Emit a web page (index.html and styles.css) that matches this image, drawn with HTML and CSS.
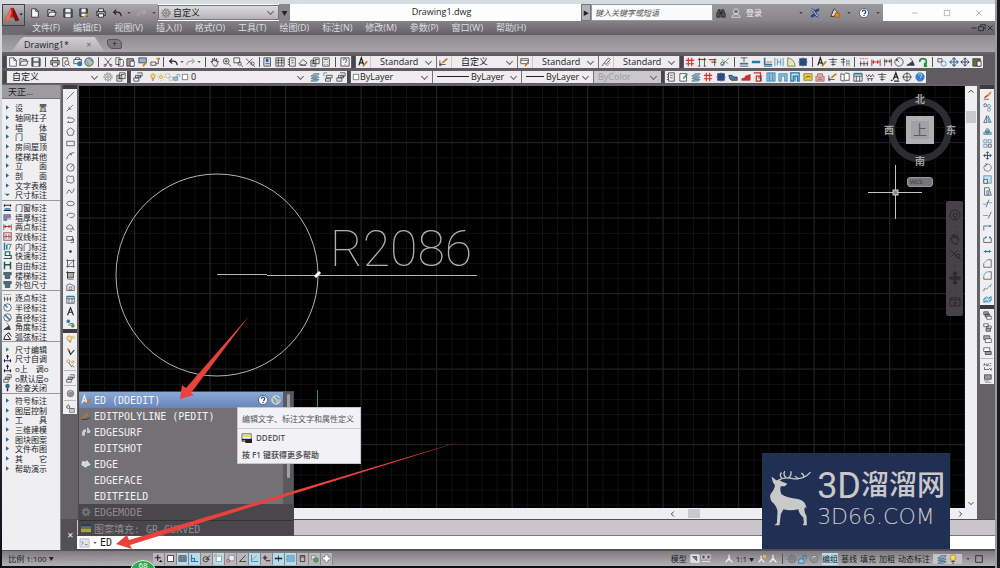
FILE: index.html
```html
<!DOCTYPE html>
<html lang="zh-CN">
<head>
    <meta charset="UTF-8">
    <meta name="viewport" content="width=device-width, initial-scale=1.0">
    <title>Drawing1.dwg</title>
    <link rel="stylesheet" href="styles.css">
</head>
<body>
    <div class="window">
        <header class="header">
            <button class="app-button" aria-label="应用程序">
                <svg viewBox="0 0 22 22"><path fill="#b3241a" d="M2 16L8 3h3l6 13-4 1-2-4H7l-1 4z"/><path fill="#ef6a55" d="M2 16L8 3l1 5-3 9z"/><path fill="#7d120c" d="M11 3l6 13-4 1-3-8z"/><path fill="#222" d="M17 9h4l-2 2z"/></svg>
            </button>
            <div class="header-rows">
                <div class="titlebar">
                    <div class="quick tools" data-icons="new open save saveas print undo dot redo dot"></div>
                    <label class="combo workspace"><span class="icons" data-draw="gear"></span>
                        <select aria-label="工作空间"><option>自定义</option></select>
                    </label>
                    <button class="more" aria-label="更多">▼</button>
                    <h1 class="title">Drawing1.dwg</h1>
                    <button class="search-arrow" aria-label="展开">▶</button>
                    <input class="search" type="text" aria-label="搜索" placeholder="键入关键字或短语">
                    <div class="account">
                        <button class="tool" data-draw="find" aria-label="查找"></button>
                        <button class="login"><span class="icons" data-draw="user"></span>登录</button>
                        <span class="tools" data-icons="dot exchange apps dot help dot"></span>
                    </div>
                    <div class="controls">
                        <button data-draw="min" aria-label="最小化"></button>
                        <button data-draw="max" aria-label="最大化"></button>
                        <button data-draw="close" aria-label="关闭"></button>
                    </div>
                </div>
                <nav class="menu">
                    <a href="#">文件(F)</a>
                    <a href="#">编辑(E)</a>
                    <a href="#">视图(V)</a>
                    <a href="#">插入(I)</a>
                    <a href="#">格式(O)</a>
                    <a href="#">工具(T)</a>
                    <a href="#">绘图(D)</a>
                    <a href="#">标注(N)</a>
                    <a href="#">修改(M)</a>
                    <a href="#">参数(P)</a>
                    <a href="#">窗口(W)</a>
                    <a href="#">帮助(H)</a>
                    <span class="doc-controls" data-icons="min restore close"></span>
                </nav>
            </div>
        </header>

        <div class="tabs">
            <button class="tab">Drawing1* <span class="tab-close">✕</span></button>
            <button class="tab-new" aria-label="新建">+</button>
        </div>

        <div class="toolbar-row">
            <i class="handle"></i>
            <div class="tools standard" data-icons="new open save | print preview publish globe | cut copy paste match block | undo dot redo dot | pan zoom zoomwin zoomprev | props center sheet markup sets calc | helpbox"></div>
            <i class="handle"></i>
            <button class="tool" data-draw="textstyle" aria-label="文字样式"></button>
            <label class="combo style"><select aria-label="文字样式"><option>Standard</option></select></label>
            <button class="tool" data-draw="dimstyle" aria-label="标注样式"></button>
            <label class="combo style"><select aria-label="标注样式"><option>自定义</option></select></label>
            <button class="tool" data-draw="tablestyle" aria-label="表格样式"></button>
            <label class="combo style"><select aria-label="表格样式"><option>Standard</option></select></label>
            <button class="tool" data-draw="leader" aria-label="引线样式"></button>
            <label class="combo style"><select aria-label="引线样式"><option>Standard</option></select></label>
            <i class="handle"></i>
            <div class="tools arch" data-icons="axis axis2 axis3 dimcut | beam bar stair mirrorv angle column | textstyle axisn axism | dims dimred dimblk dial level rotateg | link movered move clip"></div>
        </div>
        <div class="toolbar-row">
            <i class="handle"></i>
            <label class="combo space"><select aria-label="工作空间"><option>自定义</option></select></label>
            <div class="tools pair" data-icons="gear sets"></div>
            <i class="handle"></i>
            <button class="tool" data-draw="layers" aria-label="图层"></button>
            <label class="combo layer"><span class="icons" data-draw="bulb sun viewport lock square"></span>
                <select aria-label="图层"><option>0</option></select>
            </label>
            <div class="tools trio" data-icons="stack layback layers"></div>
            <i class="handle"></i>
            <label class="combo color"><span class="icons" data-draw="square"></span>
                <select aria-label="颜色"><option>ByLayer</option></select>
            </label>
            <label class="combo linetype"><i class="line"></i>
                <select aria-label="线型"><option>ByLayer</option></select>
            </label>
            <label class="combo weight"><i class="line"></i>
                <select aria-label="线宽"><option>ByLayer</option></select>
            </label>
            <label class="combo plot"><select aria-label="打印样式" disabled><option>ByColor</option></select></label>
            <i class="handle"></i>
            <div class="tools arch2" data-icons="sheet edit stack axis column roof stairs door wall pipe wall2 yellow house dimstyle book table dims2 axisn leveltext target helpblue"></div>
        </div>

        <main class="main">
            <aside class="palette">
                <h2>天正...</h2>
                <div class="palette-list" id="palette"></div>
            </aside>
            <div class="work">
                <div class="work-top">
                    <div class="side-tools">
                        <i class="grip"></i>
                        <div class="column" data-icons="line xline pline polygon rect arc circle cloud spline ellipse earc insert makeblock point hatch gradient region table text addsel"></div>
                        <i class="grip"></i>
                        <div class="column" data-icons="bulbset pen penset - layers - sphere - sunbox"></div>
                    </div>
                    <div class="viewport">
                        <div class="canvas">
                            <svg class="drawing" aria-label="图形">
                                <defs>
                                    <pattern id="minor" x="10" y="11" width="15.1" height="15.1" patternUnits="userSpaceOnUse"><path d="M.5 0V15.1M0 .5H15.1" stroke="#111115"/></pattern>
                                    <pattern id="major" x="55" y="56" width="75.5" height="75.5" patternUnits="userSpaceOnUse"><path d="M.5 0V75.5M0 .5H75.5" stroke="#202027"/></pattern>
                                </defs>
                                <rect width="100%" height="100%" fill="url(#minor)"/>
                                <rect width="100%" height="100%" fill="url(#major)"/>
                                <circle cx="138" cy="189" r="101" fill="none" stroke="#b4b4b4"/>
                                <path d="M138 188.500h50M188 189.500h210" stroke="#b4b4b4" fill="none"/>
                                <path d="M236 191l5-5" stroke="#fff" stroke-width="3"/>
                                <path d="M238.500 304v21" stroke="#2f9a35"/>
                                <text class="radius-text" x="251" y="180">R2086</text>
                            </svg>
                            <svg class="crosshair" viewBox="0 0 54 54" aria-hidden="true"><path d="M0 27.500h54M27.500 0v54" stroke="#c4c4bf"/><rect x="25" y="25" width="5" height="5" fill="#888" stroke="#ccc"/></svg>
                            <div class="compass">
                                <span class="north">北</span>
                                <span class="west">西</span>
                                <button class="cube">上</button>
                                <span class="east">东</span>
                                <span class="south">南</span>
                            </div>
                            <button class="wcs">WCS</button>
                            <div class="navbar" data-icons="wheel dot pan zoomprev dot orbit dot show"></div>
                        </div>
                        <div class="vscroll"><span data-draw="up"></span><i></i><span class="down" data-draw="down"></span></div>
                        <div class="hscroll"><span data-draw="left"></span><i></i><span class="right" data-draw="right"></span></div>
                    </div>
                    <div class="side-tools modify">
                        <i class="grip"></i>
                        <div class="column" data-icons="erase copyobj mirror offset array move rotate scale stretch trim extend breakat break join chamfer fillet blend explode"></div>
                        <i class="grip"></i>
                        <div class="column" data-icons="front back above under - abc hatchback"></div>
                    </div>
                </div>
                <div class="command">
                    <button class="command-close" aria-label="关闭命令行">✕</button>
                    <div class="command-body">
                        <label class="prompt"><span data-draw="prompt"></span><span data-draw="dot"></span>
                            <input type="text" value="ED" aria-label="命令">
                        </label>
                        <div class="suggest">
                            <ul class="matches">
                                <li class="selected"><span data-draw="textstyle"></span>ED (DDEDIT)<b data-draw="help globe"></b></li>
                                <li><span data-draw="pedit"></span>EDITPOLYLINE (PEDIT)</li>
                                <li><span data-draw="surf"></span>EDGESURF</li>
                                <li><span></span>EDITSHOT</li>
                                <li><span data-draw="edge"></span>EDGE</li>
                                <li><span></span>EDGEFACE</li>
                                <li><span></span>EDITFIELD</li>
                            </ul>
                            <ul class="extra">
                                <li><span data-draw="cog"></span>EDGEMODE</li>
                                <li><span data-draw="fill"></span>图案填充: GR_CURVED</li>
                            </ul>
                        </div>
                        <div class="tip">
                            <p>编辑文字、标注文字和属性定义</p>
                            <h3><span data-draw="ddedit"></span>DDEDIT</h3>
                            <h4>按 F1 键获得更多帮助</h4>
                        </div>
                    </div>
                </div>
            </div>
        </main>

        <footer class="status">
            <button class="ratio">比例 1:100 <small>▼</small></button>
            <span class="coords">-1959826, 3205471, 0</span>
            <div class="toggles" id="toggles" data-icons="snap square grid ortho polar osnap osnap3 otrack ducs dyn lwt tpy qp sc plus"></div>
            <div class="status-right">
                <button>模型</button>
                <span class="tools" data-icons="layout layout2"></span>
                <button class="scale"><span data-draw="person"></span>1:1 <small>▼</small></button>
                <span class="tools" data-icons="personsun person | gear lock sphere"></span>
                <button class="on">编组</button>
                <button>基线</button>
                <button>填充</button>
                <button>加粗</button>
                <button>动态标注</button>
                <span class="tools tray" data-icons="stack bulb"></span>
                <span class="tools" data-icons="dot max"></span>
            </div>
        </footer>
    </div>

    <div class="speed">68</div>

    <svg class="arrows" aria-hidden="true">
        <path fill="#e8423c" d="M249 316L191 393L194 395L180 399L182 385L186 388Z"/>
        <path fill="#e8423c" d="M462 441L130 545L132 549L116 544L127 535L129 540Z"/>
    </svg>

    <div class="brand">
        <svg viewBox="0 0 140 175" aria-hidden="true">
            <path fill="#c9c9c9" d="M14 22L28 34Q36 30 46 38L62 44L54 52L42 52Q38 64 44 76Q58 86 88 90Q112 92 118 110L120 120Q116 112 114 118Q112 132 120 142L121 170H109L112 162L110 146Q98 138 95 122Q70 128 50 122L42 136L38 170H22L30 164L32 128Q30 112 14 98Q6 84 12 74Q24 60 24 48Q16 40 14 22Z"/>
            <path fill="none" stroke="#c9c9c9" stroke-width="4" d="M34 34Q52 22 80 29Q112 32 132 9M46 28Q36 20 44 10M57 26Q48 16 54 6M66 26Q76 16 72 6M96 30Q88 22 84 22M112 25Q112 16 104 12"/>
        </svg>
        <div class="brand-text">
            <div class="brand-name"><b>3D</b>溜溜网</div>
            <div class="brand-site">3D66.COM</div>
        </div>
    </div>

    <script src="app.js"></script>
</body>
</html>
```

FILE: styles.css
```css
* {
    box-sizing: border-box;
}

body {
    margin: 0;
    height: 100vh;
    overflow: hidden;
    position: relative;
    background: linear-gradient(#d9dcde 0, #c3ced2 45%, #222835 75%, #0c0f18 100%);
    font-family: "Open Sans", "Noto Sans CJK SC", sans-serif;
    font-size: 9px;
    color: #222;
}

button, input, select {
    font: inherit;
    color: inherit;
    border: 0;
    padding: 0;
    margin: 0;
    background: none;
}

ul, h1, h2, h3, h4, p {
    margin: 0;
    padding: 0;
    font: inherit;
    list-style: none;
}

svg {
    display: block;
}

.icon {
    width: 10px;
    height: 10px;
    flex: none;
    overflow: visible;
}

.window {
    height: 100%;
    margin: 0 0 0 2px;
    padding: 4px 0 2px;
    border-right: 3px solid #1c1c20;
    box-shadow: inset -2px 0 #9a9a9f;
    padding-right: 2px;
    display: flex;
    flex-direction: column;
}

/* title and menu */
.header {
    display: flex;
    background: #6e6c71;
}

.app-button {
    width: 23px;
    height: 22px;
    background: linear-gradient(#bbb9be, #79777c);
    border: 1px solid #444;
}

.header-rows {
    flex: 1;
}

.titlebar {
    display: flex;
    height: 17px;
    background: #fdfdfd;
    align-items: stretch;
}

.tools, .icons {
    display: flex;
    align-items: center;
}

.tools button {
    flex: 1 1 0;
    display: flex;
    justify-content: center;
    min-width: 0;
}

.tools .small {
    flex-grow: 0.5;
}

.quick {
    width: 133px;
    padding-left: 2px;
    background: linear-gradient(#aaa8ad, #87858a);
}

.combo {
    display: flex;
    align-items: center;
    position: relative;
    background: #eeecee;
    height: 12px;
    padding-left: 4px;
    gap: 2px;
}

.combo select {
    appearance: none;
    flex: 1;
    min-width: 0;
    height: 12px;
    line-height: 12px;
}

.combo::after {
    content: "";
    position: absolute;
    right: 5px;
    top: 3px;
    width: 4px;
    height: 4px;
    border: solid #666;
    border-width: 0 1px 1px 0;
    transform: rotate(45deg);
}

.workspace {
    width: 121px;
    height: 15px;
    margin-top: 1px;
    padding-left: 2px;
    border: 1px solid #777;
    background: linear-gradient(#dddbdf, #b5b3b7);
}

.more {
    width: 11px;
    font-size: 6px;
    background: #8a888d;
}

.title {
    flex: 1;
    text-align: center;
    font-size: 9px;
    line-height: 16px;
    padding-left: 12px;
}

.search-arrow {
    width: 10px;
    font-size: 6px;
    background: #b4b2b6;
    border: 1px solid #777;
}

.search {
    width: 122px;
    font-style: italic;
    font-size: 8px;
    padding: 0 3px;
    background: #fafafa;
    border: 1px solid #999;
}

.search::placeholder {
    color: #555;
}

.account {
    width: 170px;
    display: flex;
    align-items: center;
    padding-left: 1px;
    background: linear-gradient(#9c9a9f, #88868b);
}

.login {
    display: flex;
    align-items: center;
    gap: 5px;
    color: #eee;
    font-size: 8px;
    margin: 0 34px 0 3px;
}

.account .tools {
    flex: 1;
}

.controls {
    width: 112px;
    padding-left: 16px;
    display: flex;
    color: #999;
}

.controls button {
    flex: 1;
    display: flex;
    align-items: center;
    justify-content: center;
}

.controls .icon {
    width: 8px;
    height: 8px;
}

.menu {
    display: flex;
    align-items: center;
    gap: 13px;
    height: 14px;
    padding-left: 7px;
    background: linear-gradient(#858388, #626065);
}

.menu a {
    color: #dedee0;
    text-decoration: none;
    line-height: 14px;
}

.doc-controls {
    margin-left: auto;
    display: flex;
    padding-right: 1px;
    color: #111;
}

.doc-controls .icon {
    width: 8px;
    height: 8px;
}

/* drawing tabs */
.tabs {
    height: 19px;
    display: flex;
    align-items: flex-end;
    padding: 0 0 1px 10px;
    gap: 3px;
    background: linear-gradient(#8e8c91, #a7a5aa);
    border-bottom: 2px solid #67656a;
}

.tab {
    width: 92px;
    height: 14px;
    padding: 0 12px;
    display: flex;
    align-items: center;
    justify-content: space-between;
    background: linear-gradient(#d0ced3, #b3b1b6);
    clip-path: polygon(0 100%, 10% 10%, 13% 0, 90% 0, 100% 100%);
}

.tab-close {
    font-size: 7px;
    color: #666;
}

.tab-new {
    width: 15px;
    height: 10px;
    margin-bottom: 2px;
    line-height: 8px;
    background: #7c7a7f;
    border: 1px solid #555;
    border-radius: 2px 5px 2px 6px;
}

/* toolbars */
.toolbar-row {
    display: flex;
    align-items: center;
    height: 15px;
    padding-left: 1px;
    background: #5e5c61;
}

.toolbar-row .tools, .toolbar-row .tool {
    height: 12px;
    background: #eeecee;
}

.toolbar-row .icon, .column .icon, .group .icon {
    stroke-width: 0.8;
}

.tool {
    display: flex;
    width: 14px;
    align-items: center;
    justify-content: center;
}

.handle {
    width: 3px;
    height: 12px;
    margin: 0 1px 0 0;
    background: #48464b;
}

.standard + .handle {
    margin-left: 1px;
}

.sep {
    flex: none;
    width: 1px;
    height: 10px;
    margin: 0 3px;
    background: #555;
}

.standard {
    width: 344px;
}

.style {
    width: 67px;
    padding-left: 9px;
    border-right: 1px solid #77757a;
    border-left: 1px solid #cccace;
}

.arch {
    width: 299px;
}

.space {
    width: 95px;
    padding-left: 5px;
}

.pair {
    width: 25px;
}

.layer {
    width: 163px;
}

.layer .icon {
    width: 8px;
    height: 8px;
}

.trio {
    width: 39px;
}

.color, .linetype, .weight {
    border-right: 1px solid #77757a;
}

.color {
    width: 82px;
    padding-left: 1px;
    gap: 0;
}

.color .icon {
    width: 8px;
    height: 8px;
}

.linetype {
    width: 89px;
}

.weight {
    width: 72px;
}

.line {
    width: 32px;
    height: 1px;
    background: #222;
}

.weight .line {
    width: 18px;
}

.plot {
    flex: none;
    width: 67px;
    background: #cac8cc;
    color: #999;
}

.plot select {
    opacity: 1;
}

.arch2 {
    width: 261px;
}

/* main area */
.main {
    flex: 1;
    min-height: 0;
    display: flex;
    padding-top: 1px;
    background: #646267;
}

.palette {
    width: 59px;
    background: #efeef1;
    border-right: 1px solid #888;
}

.palette h2 {
    height: 14px;
    line-height: 14px;
    padding-left: 6px;
    background: #9d9ba0;
    border-bottom: 1px solid #77757a;
}

.palette-list {
    height: 374px;
    padding-top: 2px;
    display: flex;
    flex-direction: column;
}

.group {
    display: flex;
    flex-direction: column;
    flex-basis: 0;
    padding-top: 2px;
}

.group + .group {
    border-top: 1px solid #99979b;
}

.group li {
    flex: 1;
    min-height: 0;
}

.group button {
    display: flex;
    align-items: center;
    gap: 3px;
    height: 100%;
    padding-left: 1px;
    font-size: 8px;
    line-height: 9px;
    white-space: nowrap;
}

.group .icon {
    width: 9px;
    height: 9px;
}

.work {
    flex: 1;
    min-width: 0;
    display: flex;
    flex-direction: column;
}

.work-top {
    flex: 1;
    min-height: 0;
    display: flex;
}

.side-tools {
    width: 14px;
    margin: 0 2px;
}

.modify {
    margin: 0 1px 0 3px;
}

.grip {
    display: block;
    height: 4px;
    background: #3d3b40;
}

.column {
    display: flex;
    flex-direction: column;
    background: #efeef1;
}

.column button {
    height: 12px;
    display: flex;
    align-items: center;
    justify-content: center;
}

.column .sep {
    width: 12px;
    height: 1px;
    margin: 1px;
    background: #bbb;
}

.column .icon {
    width: 9px;
    height: 9px;
}

.viewport {
    flex: 1;
    min-width: 0;
    display: grid;
    grid-template-columns: 1fr 12px;
    grid-template-rows: 1fr 11px;
    padding-top: 1px;
}

.canvas {
    position: relative;
    background: #000;
    overflow: hidden;
}

.drawing {
    width: 100%;
    height: 100%;
}

.radius-text {
    font-family: Roboto, sans-serif;
    font-weight: 100;
    font-size: 50px;
    fill: #b0b0b0;
}

.crosshair {
    position: absolute;
    right: 43px;
    top: 79px;
    width: 54px;
    height: 54px;
}

.compass {
    position: absolute;
    right: 6px;
    top: 5px;
    width: 78px;
    height: 78px;
    display: grid;
    grid-template: "a n b" 16px "w c e" 1fr "x s y" 16px / 16px 1fr 16px;
    place-items: center;
    color: #a3a3a3;
    font-size: 10px;
    font-weight: 700;
    line-height: 12px;
    isolation: isolate;
}

.compass::before {
    content: "";
    position: absolute;
    z-index: -1;
    inset: 7px;
    border: 7px solid #2e2c30;
    border-radius: 50%;
}

.north { grid-area: n; }
.south { grid-area: s; }
.west { grid-area: w; }
.east { grid-area: e; }

.cube {
    grid-area: c;
    width: 28px;
    height: 28px;
    background: #a0a2a3;
    border: 5px solid #b0afb1;
    color: #5a5a5c;
    font-size: 14px;
    font-weight: 400;
    line-height: 16px;
}

.wcs {
    position: absolute;
    right: 32px;
    top: 91px;
    width: 26px;
    height: 10px;
    background: #77757e;
    border: 1px solid #99979f;
    border-radius: 3px;
    color: #333;
    font-size: 6px;
    line-height: 8px;
    text-align: left;
    padding-left: 2px;
}

.navbar {
    position: absolute;
    right: 2px;
    top: 115px;
    width: 17px;
    height: 115px;
    padding: 8px 0;
    display: flex;
    flex-direction: column;
    align-items: center;
    justify-content: space-between;
    background: #454347;
    border-radius: 2px;
    color: #29272b;
}

.navbar .icon {
    width: 12px;
    height: 12px;
}

.navbar .small .icon {
    height: 6px;
}

.vscroll, .hscroll {
    display: flex;
    align-items: center;
    background: #efeef1;
}

.vscroll {
    flex-direction: column;
}

.vscroll i {
    width: 10px;
    height: 12px;
    margin-top: 15px;
    background: #cac8cc;
}

.down {
    margin-top: auto;
}

.hscroll {
    grid-column: span 2;
    padding-left: 589px;
}

.hscroll i {
    width: 12px;
    height: 9px;
    margin-left: 10px;
    background: #cac8cc;
}

.right {
    margin: 0 12px 0 auto;
}

/* command line */
.command {
    display: flex;
    height: 31px;
    padding: 1px 0 1px 2px;
    background: #525055;
}

.command-close {
    width: 14px;
    color: #eee;
    font-size: 8px;
}

.command-body {
    flex: 1;
    position: relative;
    background: #c8c6ca;
    display: flex;
    align-items: flex-end;
}

.prompt {
    flex: 1;
    display: flex;
    align-items: center;
    height: 14px;
    padding-left: 3px;
    background: #fff;
    border-top: 1px solid #777;
}

.prompt input {
    flex: 1;
    outline: 0;
    font-family: "DejaVu Sans Mono", monospace;
    font-size: 10px;
}

.suggest {
    position: absolute;
    left: 1px;
    bottom: 13px;
    width: 216px;
    font-family: "DejaVu Sans Mono", "Noto Sans CJK SC", monospace;
    font-size: 10px;
    color: #f2f2f2;
    background: #737175;
    border: 1px solid #4b494d;
}

.suggest li {
    display: flex;
    align-items: center;
    gap: 3px;
    height: 16px;
    padding-left: 2px;
}

.suggest li > span {
    width: 10px;
    flex: none;
}

.matches {
    border-right: 10px solid #5b595e;
    position: relative;
}

.matches::after {
    content: "";
    position: absolute;
    right: -7px;
    top: 2px;
    width: 3px;
    height: 84px;
    border-radius: 2px;
    background: #a3a1a5;
}

.suggest .selected {
    background: linear-gradient(#8ca9d6, #6685ba);
}

.selected b {
    display: flex;
    gap: 3px;
    margin: 0 2px 0 auto;
}

.extra {
    background: #49474b;
    color: #8f8d91;
}

.extra li + li {
    height: 15px;
    border-top: 1px solid #333;
}

.tip {
    position: absolute;
    left: 160px;
    bottom: 85px;
    width: 124px;
    height: 57px;
    background: #f1f1f6;
    border: 1px solid #c5c5cc;
    color: #555;
    font-size: 8px;
    font-weight: 600;
}

.tip p {
    height: 21px;
    line-height: 21px;
    padding-left: 4px;
    font-weight: 400;
    white-space: nowrap;
    border-bottom: 1px solid #ccc;
}

.tip h3, .tip h4 {
    display: flex;
    align-items: center;
    gap: 4px;
    height: 17px;
    padding-left: 4px;
}

/* status bar */
.status {
    display: flex;
    align-items: center;
    height: 16px;
    border-top: 1px solid #555;
    background: linear-gradient(#7d7b80, #b3b1b6);
    font-size: 8px;
}

.ratio {
    width: 58px;
    font-size: 8px;
    white-space: nowrap;
}

.status small {
    font-size: 5px;
    vertical-align: 2px;
}

.coords {
    width: 93px;
    padding-left: 3px;
    font-family: "Liberation Mono", monospace;
    font-size: 7px;
    line-height: 8px;
    color: #98969b;
    white-space: nowrap;
}

.toggles {
    display: flex;
}

.toggles button {
    width: 12px;
    height: 12px;
    display: flex;
    align-items: center;
    justify-content: center;
    background: #b9b7bb;
    border-right: 1px solid #88868a;
}

.toggles .icon {
    width: 9px;
    height: 9px;
}

.toggles .on, .status-right .on {
    background: #b5dcea;
}

.status-right {
    margin-left: auto;
    display: flex;
    align-items: center;
    gap: 3px;
    padding-right: 9px;
}

.status-right > button {
    height: 12px;
    line-height: 12px;
}

.status-right .tools {
    gap: 1px;
}

.scale {
    display: flex;
    align-items: center;
    gap: 2px;
    margin-left: 10px;
}

.tray {
    background: #c5c3c7;
    padding: 0 4px;
}

.speed {
    position: absolute;
    left: 129px;
    bottom: -20px;
    width: 28px;
    height: 28px;
    border: 1px solid #d8f0da;
    border-radius: 50%;
    background: #2fa84c;
    color: #fff;
    text-align: center;
    font-size: 8px;
    line-height: 8px;
}

.arrows {
    position: absolute;
    left: 0;
    top: 0;
    width: 100%;
    height: 100%;
    pointer-events: none;
}

.brand {
    position: absolute;
    right: 50px;
    bottom: 19px;
    width: 188px;
    height: 96px;
    padding: 15px 5px 0;
    display: flex;
    background: #222f55;
    color: #c9c9c9;
}

.brand > svg {
    width: 48px;
    height: 60px;
    margin-right: 4px;
}

.brand-text {
    white-space: nowrap;
}

.brand-name {
    display: flex;
    align-items: center;
    height: 36px;
    font-family: Roboto, "Noto Sans CJK SC", sans-serif;
    font-weight: 500;
    font-size: 28px;
    line-height: 36px;
}

.brand-name b {
    font-size: 36px;
    font-weight: 400;
}

.brand-site {
    font-family: "DejaVu Sans", sans-serif;
    font-weight: 200;
    font-size: 22px;
    line-height: 26px;
}
```

FILE: app.js
```javascript
// every icon is drawn on a 12 x 12 grid
const B = 'stroke="#2878a8"';
const R = 'stroke="#c8322c"';
const O = 'stroke="#c87820"';

const icons = {
    new: '<path fill="#fff" d="M2 1h5l3 3v7H2z"/><path d="M7 1v3h3"/>',
    open: '<path fill="#ddd" d="M1 10V2h3l1 1h4v2"/><path fill="#e8eef4" d="M1 10l2-5h8l-2 5z"/>',
    save: '<path fill="#55606e" d="M1 1h9l1 1v9H1z"/><path fill="#eee" stroke="none" d="M3 1h6v4H3zM3 7h6v4H3z"/>',
    saveas: '<path fill="#55606e" d="M1 1h9v9H1z"/><path fill="#eee" stroke="none" d="M3 1h5v4H3zM3 7h5v3H3z"/><path stroke="#e09a30" stroke-width="2" d="M6 11l5-4"/>',
    print: '<path fill="#fff" d="M3 4V1h6v3"/><rect fill="#aaa" x="1" y="4" width="10" height="5"/><path fill="#fff" d="M3 7h6v4H3z"/>',
    preview: '<path d="M8 4V1H2v10h3"/><circle cx="7" cy="7" r="2.500"/><path d="M9 9l2 2"/>',
    publish: '<path d="M3 3V1h5v2M1 3h9v5H1z"/><circle cx="8" cy="8" r="3" fill="#2878a8" stroke="none"/>',
    globe: '<circle cx="6" cy="6" r="5" fill="#a9c2cc"/><path stroke="#5b7d4c" d="M2 4q4 3 3 6M6 1q1 4 5 4"/><path stroke="#e2b33c" d="M7 10l4-4"/>',
    cut: '<path d="M2 1l7 9M10 1L3 10"/><circle cx="2.500" cy="10" r="1.300"/><circle cx="9.500" cy="10" r="1.300"/>',
    copy: '<path fill="#fff" d="M1 1h5v8H1zM4 3h5l1 1v7H4z"/>',
    paste: '<path fill="#999" d="M1 2h8v9H1z"/><path fill="#fff" d="M5 5h5v6H5z"/>',
    match: '<path fill="#8fb5d5" d="M1 1h9v6H1z"/><path stroke="#c87820" stroke-width="2" d="M6 11l4-5"/>',
    block: `<path d="M1 10V6h6v4zM7 8h3V3"/><path ${O} stroke-width="2" d="M8 2h4"/>`,
    undo: '<path stroke-width="1.400" d="M11 10q0-5-5-5H2M5 2L2 5l3 3"/>',
    redo: '<path stroke="#aaa" stroke-width="1.400" d="M1 10q0-5 5-5h4M7 2l3 3-3 3"/>',
    dot: '<path fill="currentColor" stroke="none" d="M4 5h4L6 7z"/>',
    pan: '<path d="M3 8L1 5l2 1V2l2 3V1l2 4 1-3v4l2-1-2 6H5z"/>',
    zoom: '<circle cx="5" cy="5" r="3.500"/><path d="M7 8l4 3M3 5h4M5 3v4"/>',
    zoomwin: '<path d="M1 1h7v6H1z"/><circle cx="8" cy="8" r="2"/><path d="M10 10l2 2"/>',
    zoomprev: '<path d="M1 2l8 7M9 2L2 9"/><circle cx="9" cy="8" r="2"/><path d="M10 10l2 2"/>',
    props: '<path fill="#d0dff0" d="M1 1h8v10H1z"/><path stroke="#2858a8" stroke-width="3" d="M5 2v4"/><path d="M3 8h5"/>',
    center: '<path d="M1 1h10v10H1zM1 4h10M1 7h10M4 1v10M8 1v10"/>',
    sheet: '<path d="M3 1h7v10H3zM1 3h2M1 6h2M1 9h2M5 4h3M5 7h3"/>',
    markup: '<path d="M1 8l5-5 5 4-4 3zM2 10h8"/>',
    sets: '<path d="M4 1h7v7H4zM1 4h6v7H1zM2 6h4M2 8h4M6 3h4"/>',
    calc: '<path d="M2 1h8v10H2zM4 3h4M4 6h1M7 6h1M4 9h1M7 9h1"/>',
    helpbox: '<path d="M1 1h10v10H1zM4 4q0-2 2-2t2 2-2 3M6 9v1"/>',
    help: '<circle cx="6" cy="6" r="5.500" fill="#fff" stroke="#555"/><path stroke="#24509b" stroke-width="1.700" d="M4 4.500q0-2 2-2t2 2-2 2.500M6 8.500v1.200"/>',
    helpblue: '<circle cx="6" cy="6" r="5" fill="#2f7ed0" stroke="#3a6ea5"/><path stroke="#fff" d="M4 4q0-2 2-2t2 2-2 3M6 9v1"/>',
    textstyle: `<path stroke-width="1.500" d="M1 10l3-9 3 9M2 7h4"/><path ${O} stroke-width="2" d="M6 11l5-6"/>`,
    dimstyle: `<path d="M1 4v7M1 9h7M3 7L1 9l2 2"/><path ${O} stroke-width="2" d="M4 7l6-5"/>`,
    tablestyle: `<path fill="#fff" d="M1 2h9v6H1zM1 4h9"/><path ${O} stroke-width="2" d="M6 11l4-5"/>`,
    leader: `<path d="M1 11l3-4M4 7l5-6 2 2-5 6z"/><path ${O} d="M7 11l4-5"/>`,
    axis: `<path ${R} stroke-width="1.300" d="M4 1v10M8 1v10M1 4h10M1 8h10"/>`,
    axis2: `<path ${R} stroke-width="1.500" d="M1 3h10"/><path d="M3 1v10M9 1v10M1 11h3M8 11h3"/>`,
    axis3: `<path ${R} stroke-width="1.500" d="M1 3h9M4 6h6"/><path d="M8 2v9"/>`,
    dimcut: '<path stroke="#3d7d4a" d="M1 11L11 1M2 3l8 5"/><circle cx="3" cy="8" r="2"/>',
    beam: `<path d="M2 1h8M6 1v5M1 11h10"/><path ${B} stroke-width="2" d="M1 8h10"/>`,
    bar: `<path ${B} stroke-width="3" d="M1 6h10"/>`,
    stair: `<path ${B} stroke-width="2" d="M2 1v8h9"/><path ${R} d="M4 6h7"/><path d="M1 11h10"/>`,
    mirrorv: `<path ${B} d="M1 1v10M4 2v8M8 2v8M11 1v10M4 6h4"/>`,
    angle: '<path fill="#e8e5b0" stroke="#446b4e" d="M2 1v10h9Q10 2 2 1z"/>',
    column: '<rect x="2" y="2" width="8" height="8" fill="#2c4a80" stroke="#2c4a80"/><path stroke="#777" d="M0 6h2M10 6h2M6 0v2M6 10v2"/>',
    axisn: '<path d="M1 3h10M3 6h7M6 1v10M4 9h5"/>',
    axism: `<path d="M1 3h5M1 6h5M4 1v10"/><path ${B} d="M8 3v8M11 3v8M8 5h3M8 8h3"/>`,
    dims: `<path ${R} stroke-dasharray="2 1" d="M1 2h10"/><path d="M2 5v6M6 5v6M10 5v6M1 8h10"/>`,
    dimred: `<path d="M1 3v8M11 3v8"/><path ${R} stroke-width="1.400" d="M1 6h10M3 4v4M8 4v4"/>`,
    dimblk: '<path d="M2 2v9M10 2v9M1 5h10M4 3v4M8 3v4"/>',
    dial: '<circle cx="6" cy="6" r="5"/><path d="M6 6L3 3M3 5V3h2"/>',
    level: '<path fill="#2b4860" d="M1 10h9L8 5 4 8z"/><path d="M5 1l3 4"/>',
    rotateg: '<path stroke="#2c8c3c" stroke-width="2" d="M2 6q0-4 4-4t4 4-2 4M8 7v4h3"/>',
    link: `<path d="M1 2h5v4H1z"/><circle cx="8" cy="8" r="3" ${B}/>`,
    movered: `<path ${R} stroke-width="1.500" d="M6 2v8"/><path ${B} stroke-width="1.300" d="M1 6h10M3 4L1 6l2 2M9 4l2 2-2 2M4 3l2-2 2 2M4 9l2 2 2-2"/>`,
    move: '<path stroke="#30465c" stroke-width="1.200" d="M6 1v10M1 6h10M4 3l2-2 2 2M4 9l2 2 2-2M3 4L1 6l2 2M9 4l2 2-2 2"/>',
    clip: '<path fill="#6b6a3c" d="M1 2h9v9H1z"/><path fill="#eef" d="M6 5h5v6H6z"/>',
    layers: '<path d="M5 1h6v4H5M3 4h6v3H3zM1 7h6v4H1z"/>',
    stack: '<path fill="#8fb9d4" stroke="#4a6a80" d="M1 5l4-3h6L8 5zM1 8l3-2h7L8 8zM1 11l3-2h7l-3 2z"/>',
    layback: `<path d="M4 4h7v3H4zM3 8h6v3H3z"/><path ${B} d="M1 5V1h4"/>`,
    edit: `<path fill="#fff" d="M1 2h8v9H1z"/><path stroke="#3a9a6a" stroke-width="2" d="M5 8l5-6"/>`,
    roof: '<path fill="#4b7ba4" d="M1 4h4l2 2h4v4H4L2 8z"/>',
    stairs: `<path fill="#c8322c" stroke="#a33" d="M1 10h10V3L5 5v2L1 8z"/>`,
    door: `<path ${R} stroke-width="1.500" d="M1 1h8v10H4V5h7"/><path d="M6 7h4v4"/>`,
    wall: `<path fill="#8fc0da" ${B} d="M1 1h10v10H1zM4 1v10M8 1v10"/>`,
    wall2: `<path fill="#bfe0ee" ${B} stroke-width="1.500" d="M1 1h10v10H9V5H4v6H1zM6 5v6"/>`,
    pipe: `<path fill="#8fc0da" ${B} d="M1 11V2h10v9H8V5H4v6z"/>`,
    yellow: '<path fill="#e8c93c" stroke="#7c6a20" d="M1 2h10v8H1z"/><path stroke="#333" d="M3 7l3-2 3 1"/>',
    house: '<path fill="#d8a8a8" stroke="#a55" d="M1 5h2V2h6v3h2v6H1zM4 7h4M4 9h4"/>',
    book: '<path fill="#fff" d="M1 2l4 1v8l-4-1zM5 3l2-2 4 1v8H6"/>',
    table: `<path fill="#e8f0f5" d="M1 2h10v9H1zM1 5h10M4 5v6M8 5v6"/><path ${B} stroke-width="2" d="M1 2h10"/>`,
    dims2: '<path d="M1 3l2 3 2-3 2 3 2-3 2 3M2 8h8M4 8v3M8 8v3"/>',
    leveltext: '<path stroke-width="1.500" d="M4 9l3-8 3 8M5 6h4M1 10h2M5 11h6"/>',
    target: '<circle cx="6" cy="6" r="4.500"/><path d="M6 0v12M0 6h12"/>',
    gear: '<circle cx="6" cy="6" r="5" stroke="#666" stroke-dasharray="2 1.500"/><circle cx="6" cy="6" r="3.800" stroke="#666"/><circle cx="6" cy="6" r="1.500" stroke="#666"/>',
    cog: '<circle cx="6" cy="6" r="4.500" stroke="#777" stroke-width="2" stroke-dasharray="1.500 1.500"/><circle cx="6" cy="6" r="2.800" stroke="#777" stroke-width="2"/>',
    bulb: '<circle cx="6" cy="4.500" r="3.500" fill="#f4d75c" stroke="#a98a3a"/><path d="M4 9h4M5 11h2"/>',
    bulbset: '<circle cx="4.500" cy="4.500" r="3.300" fill="#f6e0a0" stroke="#b37d30"/><path d="M4 9h3"/><circle cx="10" cy="3" r="1.500" stroke="#e09a30"/>',
    sun: '<circle cx="6" cy="6" r="2.500" fill="#f5dd70" stroke="#b3954a"/><path stroke="#b3954a" d="M6 0v2M6 10v2M0 6h2M10 6h2M2 2l1 1M9 9l1 1M2 10l1-1M9 3l1-1"/>',
    viewport: '<path stroke="#aaa" d="M1 1h6v6H1zM6 6h5v5H6z"/>',
    lock: `<path fill="#9cc4e0" ${B} d="M1 6h6v5H1z"/><path ${B} d="M6 6V2h4v4"/>`,
    square: '<path fill="#fff" d="M2 2h8v8H2z"/>',
    find: '<path fill="#555" d="M1 11V7l2-5h2v9zM7 11V2h2l2 5v4zM5 5h2v2H5z"/>',
    user: '<circle cx="6" cy="4" r="3" fill="#777" stroke="#eee"/><path fill="#777" stroke="#eee" d="M1 11q0-3 5-3t5 3z"/>',
    exchange: '<path stroke="#27487f" stroke-width="3" d="M1 2q4 0 5 4t5 4M11 2Q7 2 6 6t-5 4"/><path stroke="#dde6f2" d="M1 2q4 0 5 4t5 4"/>',
    apps: '<path fill="#ddd" d="M5 1L1 10h4l4-5z"/><path fill="#e08a2c" stroke="#a55d14" d="M6 6h5v5H6z"/>',
    min: '<path d="M2 6h8"/>',
    max: '<path d="M2 2h8v8H2z"/>',
    restore: '<path d="M4 4V1h7v6H8M1 4h7v6H1z"/>',
    close: '<path d="M2 2l8 8M10 2l-8 8"/>',
    line: '<path d="M1 11L11 1"/>',
    xline: '<path stroke-dasharray="5 2" d="M1 11L11 1"/><path d="M4 5v3h3"/>',
    pline: '<path d="M2 10h6q3-1 3-3T8 4H2l2-2M2 10l2-2"/>',
    polygon: '<path d="M6 1l5 4-2 6H3L1 5z"/>',
    rect: '<path d="M1 3h10v6H1z"/>',
    arc: '<path d="M1 11Q2 3 11 2M5 4h2v2"/>',
    circle: '<circle cx="6" cy="6" r="5"/><path d="M6 6l3-3"/>',
    cloud: '<path d="M3 1q3 1 3 1 5-2 4 3 2 4-1 5-3 2-4 0-4 1-4-2 1-3 0-4 0-3 2-3z"/>',
    spline: '<path d="M1 9q3-8 5-3t5-4"/>',
    ellipse: '<ellipse cx="6" cy="6" rx="5" ry="3"/>',
    earc: '<path d="M2 7q-2-4 4-4t5 3-4 3l-2-1"/>',
    insert: '<path d="M1 5l4-3 4 3v3H1zM4 11h4M9 7l2 3"/>',
    makeblock: '<path d="M1 2h8v5H1zM6 7l4-2v5H6"/>',
    point: '<rect x="5" y="5" width="2" height="2" fill="#222"/>',
    hatch: '<path stroke="#555" d="M2 2h8v8H2zM0 2h12M0 10h12M2 0v12M10 0v12M3 9l6-6"/>',
    gradient: '<path fill="#aaa" d="M2 2h8v7H2zM0 2h12M2 0v11M3 11h7"/>',
    region: '<path d="M1 3l4-2 6 3v6H1z"/><circle cx="6" cy="7" r="2"/>',
    text: '<path stroke-width="1.500" d="M2 11l4-10 4 10M3 7h6"/>',
    addsel: `<circle cx="3" cy="3" r="2" ${B} fill="#2878a8"/><circle cx="9" cy="9" r="2" stroke="#3a9a4a" fill="#3a9a4a"/><path d="M5 6h5M6 8H3"/>`,
    pen: `<path ${O} stroke-width="2" d="M2 2l3 4"/><path stroke-width="1.500" d="M4 5l2 5 5-6"/>`,
    penset: `<circle cx="3" cy="3" r="2" ${O}/><circle cx="9" cy="4" r="1.500" ${O}/><path d="M4 5l4 6M8 8l3 3"/>`,
    sphere: '<circle cx="6" cy="6" r="4.500" fill="#8b9499" stroke="#777"/><path stroke="#ddd" d="M3 5q2-3 5-2"/>',
    sunbox: '<circle cx="3" cy="4" r="2"/><path d="M5 6h6v5H5zM7 8h2M3 0v1M0 4h1"/>',
    erase: `<path fill="#e0a040" ${O} d="M10 1L5 6l2 1 4-5z"/><path ${R} stroke-width="2" d="M2 9l4-3"/><path d="M1 11h7"/>`,
    copyobj: `<circle cx="3" cy="3" r="2"/><circle cx="8" cy="4" r="2" ${B}/><circle cx="8" cy="9" r="2" ${B}/>`,
    mirror: `<path d="M5 1v9H1z"/><path fill="#8fc0da" ${B} d="M7 1v9h4z"/>`,
    offset: `<path fill="#9cc4e0" ${B} d="M1 10V7h2q0-5 3-5t3 5h2v3z"/><path d="M4 8q0-3 2-3t2 3z"/>`,
    array: `<path ${B} d="M1 1h4v4H1zM7 1h4v4H7zM1 7h4v4H1z"/><path d="M7 7h4v4H7z"/>`,
    rotate: '<path stroke="#444" d="M4 2q5-2 7 3 0 6-5 6T1 6q0-3 4-4M3 0l2 2-2 3"/>',
    scale: `<path ${B} fill="#bfe0f0" d="M1 1h10v10H1z"/><path fill="#eee" d="M1 6h5v5H1z"/>`,
    stretch: `<path d="M2 1h6l3 10H2z"/><path fill="#9cc4e0" ${B} d="M5 5h3v5H5z"/>`,
    trim: `<path ${B} d="M0 7h4M8 5h4M4 5h3"/><path d="M4 11L8 1"/>`,
    extend: `<path ${B} d="M0 6h7"/><path d="M7 10l4-9"/>`,
    breakat: '<path d="M1 10V4h7"/><path stroke="#2878a8" stroke-width="2" d="M8 4h3"/>',
    break: '<path d="M1 10V4h3M8 4h3v6H1"/><path stroke="#2878a8" stroke-width="2" d="M3 3h2M8 3h2"/>',
    join: `<path ${B} stroke-width="1.300" d="M1 6h10M3 4l2 2-2 2M9 4L7 6l2 2"/>`,
    chamfer: `<path d="M1 6v5h10V1H6"/><path ${B} d="M1 6l5-5"/>`,
    fillet: `<path d="M1 8v3h10V1H8"/><path ${B} d="M1 8q0-7 7-7"/>`,
    blend: `<path d="M1 11q0-4 2-4"/><path ${B} d="M3 7q3 3 4-1t3-1l1-4"/>`,
    explode: `<path fill="#6fb0d8" ${B} d="M1 5l4-3 2 2 4-2v5l-3 3-3-1-4 1z"/><path stroke="#fff" d="M4 2l4 8M1 7l9-2"/>`,
    front: '<path fill="#aaa" d="M1 1h6v4H1zM3 4h6v4H3z"/><path fill="#fff" d="M5 7h6v4H5z"/>',
    back: '<path fill="#fff" d="M1 1h6v4H1zM5 4h6v3H5z"/><path fill="#aaa" d="M4 7h6v4H4z"/>',
    above: '<path fill="#aaa" d="M1 1h8v5H1z"/><path fill="#fff" d="M3 5h8v5H3z"/>',
    under: '<path fill="#fff" d="M1 1h8v5H1z"/><path fill="#999" d="M3 6h8v4H3z"/>',
    abc: '<path d="M1 5l1-3 1 3M5 2v3h2V2M9 2h2M9 5h2M2 7v3h6M8 8l3 3v-3"/>',
    hatchback: `<path fill="#999" d="M2 1h9v6H2z"/><path ${B} d="M1 9h7M3 11h8"/>`,
    wheel: '<circle cx="6" cy="6" r="5"/><circle cx="6" cy="6" r="2"/><path d="M6 8v3"/>',
    orbit: '<path stroke-width="1.500" d="M6 0v12M0 6h12M4 2l2-2 2 2M4 10l2 2 2-2"/><ellipse cx="6" cy="6" rx="5" ry="2"/>',
    show: '<path d="M1 2h10v8H1zM1 4h10M5 6l3 1-3 2z"/>',
    up: '<path d="M3 8l3-3 3 3"/>',
    down: '<path d="M3 5l3 3 3-3"/>',
    left: '<path d="M7 3L4 6l3 3"/>',
    right: '<path d="M5 3l3 3-3 3"/>',
    prompt: '<path fill="#e3e3ee" stroke="#b5b5c5" d="M0 1h11v10H0z"/><path stroke="#666" d="M2 4l2 2-2 2M6 8h3"/>',
    pedit: `<path ${O} stroke-width="2" d="M2 9l6-6"/><path stroke="#333" d="M1 10h6l4-2"/>`,
    surf: '<path fill="#b8cddd" stroke="#ddd" d="M2 10q-1-6 3-7l1 2q-3 1-2 5zM8 1l3 5-3 1z"/>',
    edge: '<path fill="#c8d9ec" stroke="#e8eef5" d="M2 3l4 1 1-2 4 5-4 1-1 2-5-3z"/>',
    fill: '<path fill="#2c3a78" stroke="none" d="M0 1h12v3H0z"/><path fill="#6f7050" stroke="none" d="M0 4h12v3H0z"/><path fill="#a9a235" stroke="none" d="M0 7h12v4H0z"/>',
    ddedit: '<path fill="#fff" stroke="#446" d="M0 1h11v9H0z"/><path fill="#e6d94a" stroke="none" d="M1 2h9v3H1z"/><path fill="#222" stroke="none" d="M0 7h12v5H4V9H0z"/>',
    snap: '<path stroke-width="1.500" d="M5 1v8M1 5h8M9 8v3M7 10h4"/>',
    grid: '<path fill="#8b9ba5" stroke="#566" d="M1 2h10v8H1zM1 5h10M1 8h10M4 2v8M8 2v8"/>',
    ortho: `<path ${B} stroke-width="1.500" d="M2 1v9h9M2 6h4v4"/>`,
    polar: '<circle cx="5" cy="7" r="3.500"/><path d="M5 7l6-5M5 7h5"/>',
    osnap: '<path fill="#fff" stroke="#888" d="M3 3h7v7H3z"/><path stroke="#c87820" d="M1 4V1h3"/>',
    osnap3: '<path fill="#eee" stroke="#888" d="M4 2h7v7H4z"/><circle cx="3" cy="9" r="2" stroke="#a44"/>',
    otrack: '<path d="M10 2L2 10h9"/>',
    ducs: `<path ${B} d="M2 1v9h9"/><path ${O} d="M3 8l6-6"/>`,
    dyn: '<path stroke-width="1.500" d="M4 2v6M1 5h6M5 9h6"/>',
    lwt: '<path stroke-width="2" d="M1 6h10"/><path d="M6 2v8"/>',
    tpy: `<path fill="#80b4dc" ${B} stroke-dasharray="1 1" d="M1 2h10v8H1z"/>`,
    qp: '<path d="M3 2h6v8H3zM3 4h6"/>',
    sc: '<path fill="#ddd" stroke="#888" d="M2 2h5v5H2z"/><circle cx="8" cy="8" r="3" fill="#5aa860" stroke="#3a7a40"/>',
    plus: '<path fill="#fff" stroke="#777" d="M4 1h4v3h3v4H8v3H4V8H1V4h3z"/>',
    layout: '<path fill="#ddd" stroke="#eee" d="M1 1h10v9H1z"/><path fill="#777" stroke="#555" d="M3 3l5 5V3z"/>',
    layout2: '<path fill="#555" stroke="#eee" d="M1 1h4v5H1zM7 1h4v5H7zM1 9h10"/>',
    person: '<path stroke="#eee" stroke-width="1.500" d="M6 1v4L2 10M6 5l4 5M4 7h4"/>',
    personsun: '<path stroke="#eee" stroke-width="1.500" d="M5 2v4L2 10M5 6l4 4"/><circle cx="9" cy="3" r="2" fill="#e8b84a" stroke="none"/>',
    tri: '<path fill="#27618f" stroke="none" d="M4 3l4 3-4 3z"/>',
    trig: '<path fill="#2a8a6a" stroke="none" d="M4 3l4 3-4 3z"/>',
    tridown: '<path fill="#27618f" stroke="none" d="M2 5h7L6 8z"/>',
    dimwin: `<path stroke-width="1.300" d="M2 2v3M10 2v3M1 3h10M1 10h10"/><path ${B} stroke-width="2" d="M2 8h8"/>`,
    dimwall: `<path fill="#8d7ca0" ${B} d="M1 2h9v4H5v4H1z"/><path ${R} d="M5 8h6"/>`,
    dimdouble: `<path stroke="#a0605c" stroke-width="1.500" d="M1 1h10v10H1zM4 3v6M8 3v6M1 6h10"/>`,
    dimdoor: `<path ${B} stroke-width="2" d="M2 1v10M5 4v6"/><path d="M5 3h6l-3 7"/>`,
    dimfast: '<path stroke="#1f5a50" stroke-width="1.500" d="M3 1h6v5M1 10h10V6H3V1"/>',
    dimfree: '<path stroke="#1f5a50" stroke-width="2" d="M2 1v10M10 1v10M2 5h8"/>',
    dimstair: '<path fill="#4a7078" stroke="#234" d="M1 2h10v3H9v5H3V5H1z"/>',
    dimradius: `<circle cx="6" cy="6" r="5"/><path ${B} stroke-width="1.500" d="M2 2l4 4"/>`,
    dimdia: `<circle cx="6" cy="6" r="5"/><path ${B} stroke-width="2" d="M3 3l6 6"/>`,
    dimarc: '<path stroke-width="1.300" d="M1 10h9L6 4M1 10Q2 3 8 1l3 5"/>',
    adjust: '<path stroke="#224" stroke-width="1.300" d="M6 1v6M2 7v4M10 7v4M1 9h10M4 3h4"/>',
    pin: '<circle cx="6" cy="4" r="3" fill="#2f6c86" stroke="none"/><path stroke-width="2" d="M6 7v4"/>'
};

function draw(name) {
    return `<svg class="icon" viewBox="0 0 12 12" fill="none" stroke="currentColor" aria-hidden="true">${icons[name]}</svg>`;
}

document.querySelectorAll('[data-draw]').forEach(el => {
    el.innerHTML = el.dataset.draw.split(' ').map(draw).join('');
});

document.querySelectorAll('[data-icons]').forEach(el => {
    el.innerHTML = el.dataset.icons.split(' ').map(name => {
        if (name === '|' || name === '-') return '<i class="sep"></i>';
        return `<button class="${name === 'dot' ? 'small' : ''}" aria-label="${name}">${draw(name)}</button>`;
    }).join('');
});

// drafting toggles that are switched on
[2, 3, 5, 8, 10, 11].forEach(i => {
    document.getElementById('toggles').children[i].classList.add('on');
});

const palette = [
    ['tri 设　　置', 'tri 轴网柱子', 'tri 墙　　体', 'tri 门　　窗', 'tri 房间屋顶', 'tri 楼梯其他', 'tri 立　　面', 'tri 剖　　面', 'tri 文字表格', 'tridown 尺寸标注'],
    ['dimwin 门窗标注', 'dimwall 墙厚标注', 'dimred 两点标注', 'dimdouble 双线标注', 'dimdoor 内门标注', 'dimfast 快速标注', 'dimfree 自由标注', 'dimstair 楼梯标注', 'dimstair 外包尺寸'],
    ['dims 逐点标注', 'dimradius 半径标注', 'dimdia 直径标注', 'level 角度标注', 'dimarc 弧弦标注'],
    ['trig 尺寸编辑', 'adjust 尺寸自调', 'adjust o上　调o', 'layers o默认层o', 'pin 检查关闭'],
    ['tri 符号标注', 'tri 图层控制', 'tri 工　　具', 'tri 三维建模', 'tri 图块图案', 'tri 文件布图', 'tri 其　　它', 'tri 帮助演示']
];

document.getElementById('palette').innerHTML = palette.map(group => {
    const items = group.map(item => {
        const [icon, label] = item.split(' ');
        return `<li><button>${draw(icon)}${label}</button></li>`;
    }).join('');
    return `<ul class="group" style="flex-grow:${group.length}">${items}</ul>`;
}).join('');
```
